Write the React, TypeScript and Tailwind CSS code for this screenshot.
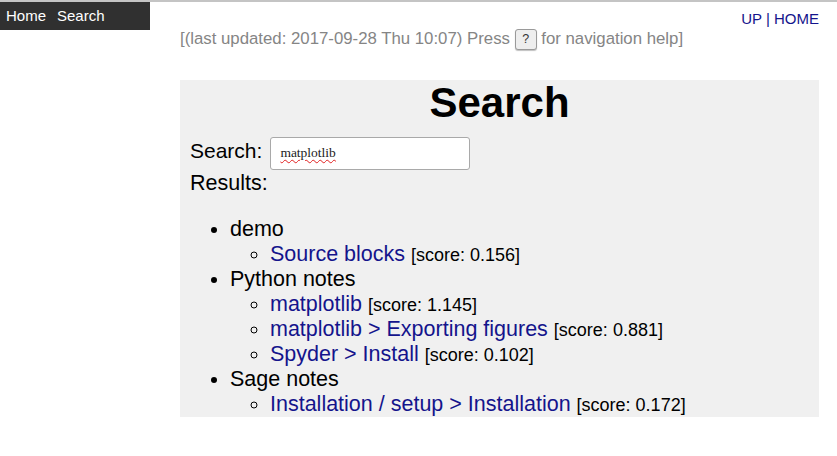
import React from "react";

const sans = { fontFamily: '"Liberation Sans", Arial, sans-serif' };

type Hit = { title: string; score: string };
type Group = { name: string; hits: Hit[] };

const groups: Group[] = [
  { name: "demo", hits: [{ title: "Source blocks", score: "0.156" }] },
  {
    name: "Python notes",
    hits: [
      { title: "matplotlib", score: "1.145" },
      { title: "matplotlib > Exporting figures", score: "0.881" },
      { title: "Spyder > Install", score: "0.102" },
    ],
  },
  {
    name: "Sage notes",
    hits: [{ title: "Installation / setup > Installation", score: "0.172" }],
  },
];

export default function App() {
  return (
    <div
      className="min-h-[456px] w-[837px] bg-white border-t-2 border-[#c4c4c4] text-black"
      style={sans}
    >
      <div className="flex items-start">
        <nav className="flex h-[28px] w-[150px] shrink-0 items-center bg-[#303030] pl-[6px] text-[15px] text-white">
          <a className="mr-[11px]">Home</a>
          <a>Search</a>
        </nav>
        <div className="ml-[30px] w-[639px]">
          <div className="mt-[8px] text-right text-[15px] leading-[17px] text-[#14148c]">
            <a>UP</a> | <a>HOME</a>
          </div>
          <p className="mt-[1.5px] text-[16.8px] leading-[20px] text-[#858585]">
            [(last updated: 2017-09-28 Thu 10:07) Press{" "}
            <kbd
              className="inline-block h-[21px] w-[22px] align-top rounded-[3px] border border-[#9a9a9a] bg-[#eeeeee] text-center text-[12.5px] leading-[19px] text-[#333] shadow-[0_1px_1px_rgba(0,0,0,0.25)]"
              style={sans}
            >
              ?
            </kbd>{" "}
            for navigation help]
          </p>
          <div className="mt-[30.5px] bg-[#f0f0f0] pl-[10px] text-[21.5px] leading-[25px]">
            <h1 className="ml-[-10px] text-center text-[42px] font-bold leading-[48px] translate-y-[-1px]">Search</h1>
            <div className="mt-[8.5px] flex items-start">
              <span className="mt-[1px] text-[21px]">Search:</span>
              <div className="ml-[8px] flex h-[33px] w-[200px] items-center rounded-[3px] border border-[#a9a9a9] bg-white pl-[9px]">
                <span
                  className="text-[13.5px] leading-[16px] text-[#222] underline decoration-wavy decoration-[#e02020] decoration-1 underline-offset-[2px]"
                  style={{ fontFamily: '"Liberation Serif", "Times New Roman", serif' }}
                >
                  matplotlib
                </span>
              </div>
            </div>
            <div className="mt-[1.5px]">Results:</div>
            <ul className="mt-[21px] list-disc pl-[40px]">
              {groups.map((g) => (
                <li key={g.name} className="leading-[25px]">
                  {g.name}
                  <ul className="list-[circle] pl-[40px]">
                    {g.hits.map((h) => (
                      <li key={h.title} className="h-[25px] leading-[25px]">
                        <a className="text-[#14148c]">{h.title}</a>{" "}
                        <span className="text-[18px] leading-none">[score: {h.score}]</span>
                      </li>
                    ))}
                  </ul>
                </li>
              ))}
            </ul>
          </div>
        </div>
      </div>
    </div>
  );
}
